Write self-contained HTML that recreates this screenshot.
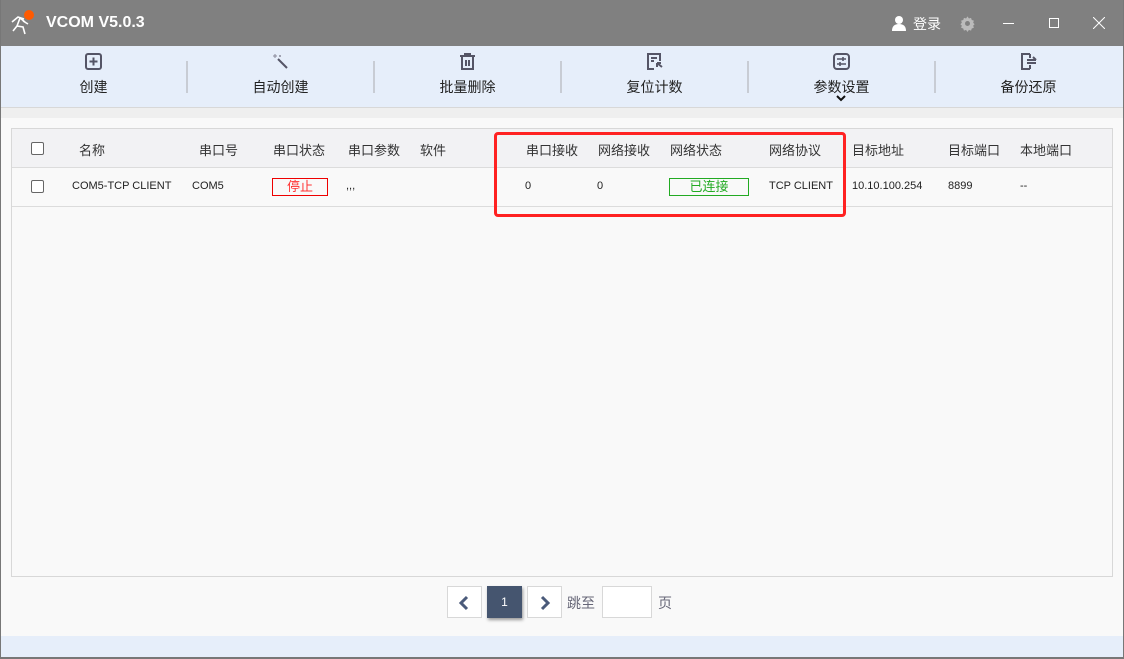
<!DOCTYPE html><html><head><meta charset="utf-8"><style>
*{margin:0;padding:0;box-sizing:border-box}
body{width:1124px;height:659px;overflow:hidden;background:#f9f9f9;font-family:"Liberation Sans","Noto Sans CJK SC",sans-serif;position:relative}
.a{position:absolute}
.title{left:0;top:0;width:1124px;height:46px;background:#808080;color:#fff}
.tb{left:0;top:46px;width:1124px;height:62px;background:#e6eefa;border-bottom:1px solid #d8d8d8}
.strip{left:0;top:108px;width:1124px;height:10px;background:#efefef}
.btn{position:absolute;top:0;width:187px;height:62px;text-align:center;font-size:14px;color:#222}
.btn svg{position:absolute;left:85px;top:7px}
.btn span{position:absolute;left:0;right:0;top:31px}
.sep{position:absolute;top:15px;width:2px;height:32px;background:#c8ccd4}
.tbl{left:11px;top:128px;width:1102px;height:449px;border:1px solid #d8d8d8;background:#f9f9f9}
.hd{position:absolute;left:0;top:0;width:1100px;height:39px;background:#f2f2f4;border-bottom:1px solid #dcdcdc}
.rw{position:absolute;left:0;top:39px;width:1100px;height:39px;border-bottom:1px solid #dcdcdc}
.c{position:absolute;font-size:13px;color:#333;top:11px;white-space:nowrap}
.rw .c{font-size:11px;top:12px;color:#222}
.cb{position:absolute;left:19px;width:13px;height:13px;border:1.5px solid #666;border-radius:2px;background:#fff}
</style></head><body>
<div class="a title">
<svg class="a" style="left:9px;top:9px" width="28" height="28" viewBox="0 0 28 28"><circle cx="20" cy="6" r="5" fill="#ff5a00"/><path d="M3 13 L9 8 L15 10 M11 9 L8 17 L4 22 M8 17 L14 18 L16 25 M14 12 L19 15 M11 9 L16 13" stroke="#fff" stroke-width="1.6" fill="none"/></svg>
<div class="a" style="left:46px;top:14px;font-size:16px;font-weight:bold">VCOM V5.0.3</div>
<svg class="a" style="left:891px;top:15px" width="16" height="16" viewBox="0 0 16 16"><circle cx="8" cy="5" r="4" fill="#fff"/><path d="M1 16 Q1 9 8 9 Q15 9 15 16Z" fill="#fff"/></svg>
<div class="a" style="left:913px;top:14px;font-size:14px">登录</div>
<svg class="a" style="left:959px;top:15px" width="17" height="17" viewBox="0 0 24 24"><path d="M12 2l2 3 3-1 1 3 3 1-1 3 2 2-2 2 1 3-3 1-1 3-3-1-2 3-2-3-3 1-1-3-3-1 1-3-2-2 2-2-1-3 3-1 1-3 3 1z" fill="#bbb"/><circle cx="12" cy="12" r="3.5" fill="#808080"/></svg>
<div class="a" style="left:1003px;top:23px;width:11px;height:1px;background:#fff"></div>
<div class="a" style="left:1049px;top:18px;width:10px;height:10px;border:1px solid #fff"></div>
<svg class="a" style="left:1093px;top:17px" width="12" height="12"><path d="M0 0L12 12M12 0L0 12" stroke="#fff"/></svg>
</div>
<div class="a tb">
<div class="btn" style="left:0"><svg width="17" height="17" viewBox="0 0 17 17"><rect x="1" y="1" width="15" height="15" rx="2" fill="none" stroke="#556" stroke-width="2"/><path d="M8.5 4.5v8M4.5 8.5h8" stroke="#556" stroke-width="2"/></svg><span>创建</span></div>
<div class="sep" style="left:186px"></div>
<div class="btn" style="left:187px"><svg width="17" height="17" viewBox="0 0 17 17"><path d="M6 6L15 15" stroke="#556" stroke-width="2"/><path d="M3 1v4M1 3h4M8 2v2M7 3h2" stroke="#889" stroke-width="1"/></svg><span>自动创建</span></div>
<div class="sep" style="left:373px"></div>
<div class="btn" style="left:374px"><svg width="17" height="17" viewBox="0 0 17 17"><path d="M1 3h15M6 3V1h5v2M3 4v12h11V4M7 7v6M10 7v6" stroke="#556" stroke-width="2" fill="none"/></svg><span>批量删除</span></div>
<div class="sep" style="left:560px"></div>
<div class="btn" style="left:561px"><svg width="17" height="17" viewBox="0 0 17 17"><path d="M8 16H2V1h12v7M5 5h6M5 8h3M16 14l-5-4M11 10v4M11 10h4" stroke="#556" stroke-width="2" fill="none"/></svg><span>复位计数</span></div>
<div class="sep" style="left:747px"></div>
<div class="btn" style="left:748px"><svg width="17" height="17" viewBox="0 0 17 17"><rect x="1" y="1" width="15" height="15" rx="3" fill="none" stroke="#556" stroke-width="2"/><path d="M4 6h9M4 11h9M10 4v4M7 9v4" stroke="#556" stroke-width="1.6"/></svg><span>参数设置</span><svg style="left:88px;top:49px" width="10" height="7"><path d="M1 1l4 4 4-4" stroke="#111" stroke-width="2" fill="none"/></svg></div>
<div class="sep" style="left:934px"></div>
<div class="btn" style="left:935px"><svg width="17" height="17" viewBox="0 0 17 17"><path d="M10 1H2v15h8M10 1v4M10 12v4M7 7h9M7 10h9M13 4l3 3" stroke="#556" stroke-width="2" fill="none"/></svg><span>备份还原</span></div>
</div>
<div class="a strip"></div>
<div class="a tbl">
<div class="hd"><div class="cb" style="top:13px"></div>
<div class="c" style="left:67px">名称</div><div class="c" style="left:187px">串口号</div><div class="c" style="left:261px">串口状态</div><div class="c" style="left:336px">串口参数</div><div class="c" style="left:408px">软件</div><div class="c" style="left:514px">串口接收</div><div class="c" style="left:586px">网络接收</div><div class="c" style="left:658px">网络状态</div><div class="c" style="left:757px">网络协议</div><div class="c" style="left:840px">目标地址</div><div class="c" style="left:936px">目标端口</div><div class="c" style="left:1008px">本地端口</div></div>
<div class="rw"><div class="cb" style="top:12px"></div>
<div class="c" style="left:60px">COM5-TCP CLIENT</div><div class="c" style="left:180px">COM5</div>
<div class="c" style="left:260px;top:10px;width:56px;height:18px;border:1px solid #e00;color:#f33;font-size:13px;text-align:center;line-height:16px">停止</div>
<div class="c" style="left:334px">,,,</div><div class="c" style="left:513px">0</div><div class="c" style="left:585px">0</div>
<div class="c" style="left:657px;top:10px;width:80px;height:18px;border:1px solid #2a2;color:#2a2;font-size:13px;text-align:center;line-height:16px">已连接</div>
<div class="c" style="left:757px">TCP CLIENT</div><div class="c" style="left:840px">10.10.100.254</div><div class="c" style="left:936px">8899</div><div class="c" style="left:1008px">--</div></div>
</div>
<div class="a" style="left:494px;top:132px;width:352px;height:85px;border:3px solid #f22;border-radius:4px"></div>
<div class="a" style="left:447px;top:586px;width:35px;height:32px;border:1px solid #d8d8d8;background:#fff"><svg style="margin:8px 0 0 10px" width="12" height="16"><path d="M9 2L3 8l6 6" stroke="#4a5a7a" stroke-width="3" fill="none"/></svg></div>
<div class="a" style="left:487px;top:586px;width:35px;height:32px;background:#45556f;color:#fff;font-size:12px;text-align:center;line-height:32px;box-shadow:1px 2px 3px #999">1</div>
<div class="a" style="left:527px;top:586px;width:35px;height:32px;border:1px solid #d8d8d8;background:#fff"><svg style="margin:8px 0 0 11px" width="12" height="16"><path d="M3 2l6 6-6 6" stroke="#4a5a7a" stroke-width="3" fill="none"/></svg></div>
<div class="a" style="left:567px;top:593px;font-size:14px;color:#667">跳至</div>
<div class="a" style="left:602px;top:586px;width:50px;height:32px;border:1px solid #d8d8d8;background:#fff"></div>
<div class="a" style="left:658px;top:593px;font-size:14px;color:#667">页</div>
<div class="a" style="left:0;top:636px;width:1124px;height:23px;background:#e6eefa"></div>
<div class="a" style="left:0;top:0;width:1px;height:659px;background:#777"></div>
<div class="a" style="left:1123px;top:0;width:1px;height:659px;background:#777"></div>
<div class="a" style="left:0;top:657px;width:1124px;height:2px;background:#777"></div>
</body></html>
